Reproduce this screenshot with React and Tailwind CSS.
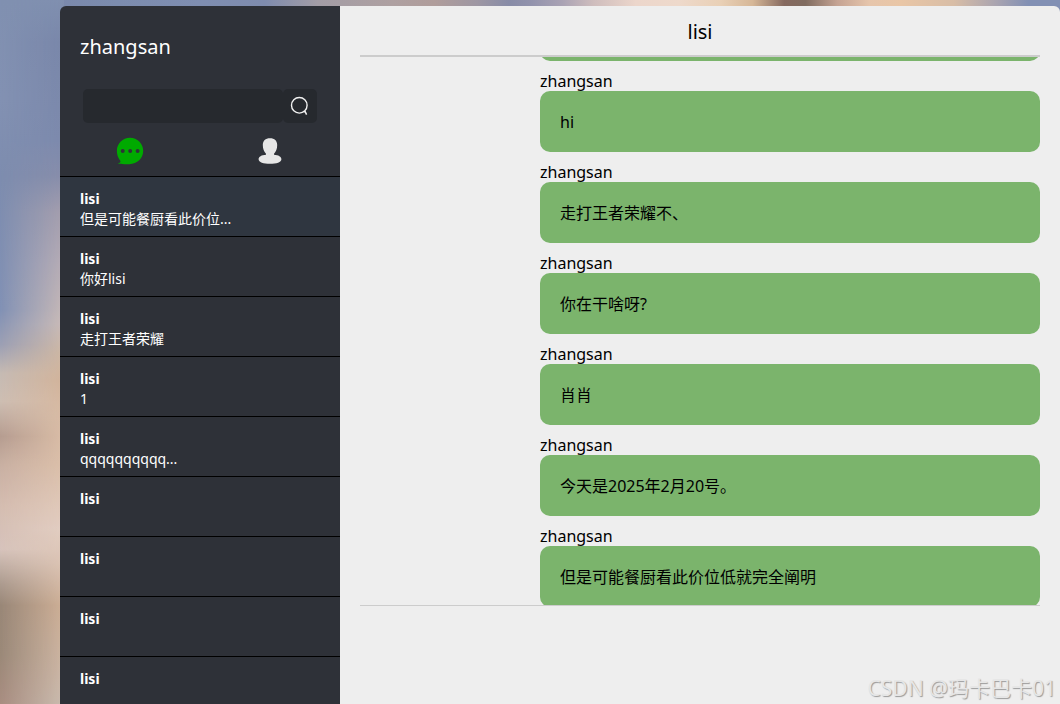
import React, { useLayoutEffect, useRef, useState } from 'react';

const chats = [
  { id: 1, name: 'lisi', last: '但是可能餐厨看此价位...' },
  { id: 2, name: 'lisi', last: '你好lisi' },
  { id: 3, name: 'lisi', last: '走打王者荣耀' },
  { id: 4, name: 'lisi', last: '1' },
  { id: 5, name: 'lisi', last: 'qqqqqqqqqq...' },
  { id: 6, name: 'lisi', last: '' },
  { id: 7, name: 'lisi', last: '' },
  { id: 8, name: 'lisi', last: '' },
  { id: 9, name: 'lisi', last: '' },
];

const messages = [
  { id: 1, from: 'zhangsan', text: '你好lisi' },
  { id: 2, from: 'zhangsan', text: 'hi' },
  { id: 3, from: 'zhangsan', text: '走打王者荣耀不、' },
  { id: 4, from: 'zhangsan', text: '你在干啥呀?' },
  { id: 5, from: 'zhangsan', text: '肖肖' },
  { id: 6, from: 'zhangsan', text: '今天是2025年2月20号。' },
  { id: 7, from: 'zhangsan', text: '但是可能餐厨看此价位低就完全阐明' },
];

const SearchIcon = () => (
  <svg viewBox="0 0 20 20" className="w-5 h-5" fill="none" stroke="#f0f0f0" strokeWidth="1.4">
    <circle cx="9.300" cy="9.3" r="7.8" />
    <path d="M13.600 15.700H15.200L16.600 18.600" strokeWidth="1.5" />
  </svg>
);

const ChatIcon = () => (
  <svg viewBox="0 0 28 28" className="w-7 h-7">
    <path
      fill="#00aa00"
      d="M14 0.8C21.2 0.8 27.2 6.6 27.2 13.8S21.3 27.2 13.2 27.2C9.6 27.2 5 27.3 2 26.5C3.4 26 4.4 25.6 4.5 24.6C4.6 23.9 4 23.2 3.4 22.4C1.8 20.2 0.9 17.2 0.9 13.8C0.9 6.6 6.8 0.8 14 0.8Z"
    />
    <g fill="#2e3238">
      <circle cx="6.7" cy="14" r="2" />
      <circle cx="14.2" cy="14" r="2" />
      <circle cx="21.6" cy="14" r="2" />
    </g>
  </svg>
);

const UserIcon = () => (
  <svg viewBox="0 0 28 28" className="w-7 h-7" fill="#e6e6e6">
    <path d="M14 1.2C18.600 1.200 21.200 3.600 21.200 8C21.200 11.800 20 14.700 18 16.800V17.700C22.500 18 25.400 19.600 25.400 22.200C25.400 25.400 20.500 26.800 14 26.800S2.600 25.400 2.600 22.200C2.600 19.600 5.500 18 10 17.700V16.800C8 14.700 6.800 11.800 6.800 8C6.800 3.600 9.400 1.200 14 1.200Z" />
  </svg>
);

const Backdrop = () => (
  <div className="absolute inset-0 -z-10 bg-[#8090b0]">
    <div className="absolute inset-x-0 top-0 h-4 bg-[linear-gradient(to_right,#8190b0_0%,#7a88ab_4%,#7c8cae_11%,#7f8eb1_19%,#7f8cae_25%,#a39da6_30%,#aea0a1_37%,#b09d9b_41%,#9e97a3_45%,#888ca7_48%,#9192ac_50%,#a9a2b4_53%,#cfbdbd_56%,#ecd6cb_60%,#eed9cb_64%,#e9d0b6_68%,#d6b797_71%,#85695f_74%,#806c60_76%,#c5a393_79%,#e6c5ab_82%,#e9c6a6_85%,#d8bda6_90%,#a9a4b0_94%,#8290b4_97%,#8290b4_100%)]" />
    <div className="absolute inset-y-0 left-0 w-16 bg-[linear-gradient(to_bottom,#8090b0_0%,#7a87aa_6%,#7d8aad_20%,#888eab_25%,#a59fae_30%,#b7adb6_37%,#cbbcb8_46%,#cfb8a4_50%,#d3b49b_54%,#d9bca5_59%,#dcc0aa_66%,#e3cec2_75%,#dcc4b4_80%,#cfb097_86%,#cdb8a8_96%,#cbbdb0_100%)]" />
    <div className="absolute inset-y-0 left-0 w-16 mask-r-from-0% mask-r-to-100% bg-[linear-gradient(to_bottom,#8090b0_0%,#8291b2_14%,#7d8cae_25%,#8090b4_44%,#9b9fb4_49%,#c5bab3_53%,#cdbdb2_57%,#b59c90_62%,#c8afa2_66%,#d4bcb0_72%,#d6c3bb_78%,#ab9a8e_83%,#988677_86%,#9a8878_93%,#a88c80_100%)]" />
  </div>
);

const Sidebar = ({ active, onSelect }) => {
  const [keyword, setKeyword] = useState('');

  return (
    <aside className="w-70 shrink-0 overflow-hidden rounded-tl-md bg-[#2e3138] text-white">
      <h1 className="px-5 pt-[25px] text-xl leading-8">zhangsan</h1>
      <form className="mt-[26px] flex px-[23px]" onSubmit={e => e.preventDefault()}>
        <input
          aria-label="search"
          value={keyword}
          onChange={e => setKeyword(e.target.value)}
          className="h-[34px] min-w-0 flex-1 rounded-[5px] bg-[#26292e] px-2 text-sm outline-none"
        />
        <button type="submit" aria-label="search" className="flex h-[34px] w-[34px] items-center justify-center rounded-[5px] bg-[#26292e]">
          <SearchIcon />
        </button>
      </form>
      <nav className="grid h-[53px] grid-cols-2 pt-0.5">
        <button aria-label="chats" className="flex items-center justify-center"><ChatIcon /></button>
        <button aria-label="contacts" className="flex items-center justify-center"><UserIcon /></button>
      </nav>
      <ul>
        {chats.map(c => (
          <li key={c.id}>
            <button
              onClick={() => onSelect(c.id)}
              className={`flex h-15 w-full flex-col items-start justify-start border-t border-black px-5 pt-3 text-left text-sm leading-5 ${c.id === active ? 'bg-[#2f3640]' : 'bg-[#2e3138]'}`}
            >
              <span className="font-bold">{c.name}</span>
              <span>{c.last}</span>
            </button>
          </li>
        ))}
      </ul>
    </aside>
  );
};

const ChatBox = () => {
  const listRef = useRef(null);

  // open on the latest messages
  useLayoutEffect(() => {
    listRef.current.scrollTop = 87;
  }, []);

  return (
    <main className="flex min-w-0 flex-1 flex-col rounded-tr-md bg-[#eeeeee] px-5 text-black">
      <h2 className="h-[51px] shrink-0 border-b-2 border-[#cccccc] text-center text-xl leading-[52px]">lisi</h2>
      <ul ref={listRef} className="h-[548px] shrink-0 overflow-y-auto [scrollbar-width:none]">
        {messages.map(m => (
          <li key={m.id} className="flex flex-col pt-2.5 pl-[180px]">
            <span className="leading-5">{m.from}</span>
            <p className="rounded-[10px] bg-[#7bb46c] px-5 pt-[21px] pb-5 leading-5">{m.text}</p>
          </li>
        ))}
      </ul>
      <div className="flex-1 border-t border-[#cccccc]">
        <textarea aria-label="message" className="h-full w-full resize-none outline-none" />
      </div>
    </main>
  );
};

const App = () => {
  const [active, setActive] = useState(1);

  return (
    <div className="relative isolate flex h-screen overflow-hidden pt-1.5 pl-15 font-['Noto_Sans','Noto_Sans_CJK_SC',sans-serif]">
      <Backdrop />
      <Sidebar active={active} onSelect={setActive} />
      <ChatBox />
      <div className="absolute right-1 bottom-0.5 text-[21px] leading-7 text-[#e6e6e6] [text-shadow:1px_1px_1px_#999999]">CSDN @玛卡巴卡01</div>
    </div>
  );
};

export default App;
